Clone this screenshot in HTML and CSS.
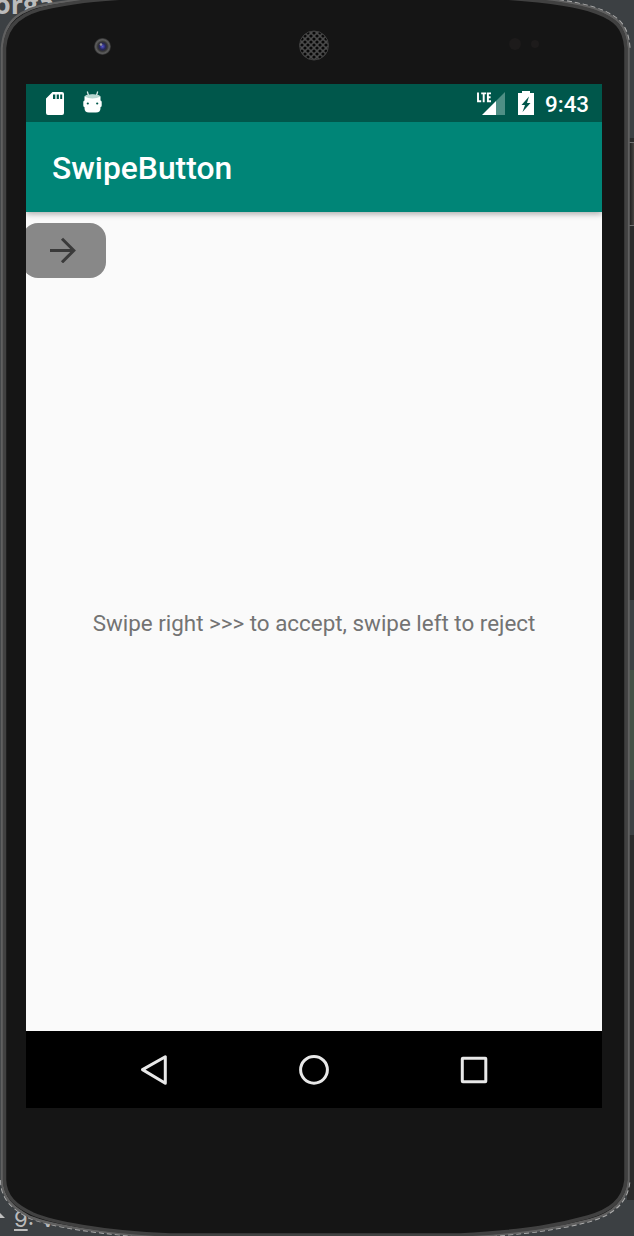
FILE: index.html
```
<!DOCTYPE html>
<html lang="en">
<head>
<meta charset="utf-8">
<title>SwipeButton</title>
<link rel="stylesheet" href="styles.css">
</head>
<body>
<div class="desktop">
  <div class="editor-text">orga</div>
  <div class="editor-tab"><u>9</u>: V</div>
  <svg class="device" viewBox="0 0 634 1236" aria-hidden="true">
    <defs>
      <radialGradient id="lens"><stop offset="0" stop-color="#5555cc"/><stop offset=".35" stop-color="#26265c"/><stop offset=".55" stop-color="#333"/><stop offset=".8" stop-color="#606060"/><stop offset="1" stop-color="#2a2a2a"/></radialGradient>
      <linearGradient id="key" x1="0" x2="1" y1="0" y2="0"><stop stop-color="#6a6a6a"/><stop offset=".3" stop-color="#202020"/><stop offset="1" stop-color="#484542"/></linearGradient>
      <pattern id="mesh" x="311" y="42" width="6" height="6" patternUnits="userSpaceOnUse"><rect width="6" height="6" fill="#4b4b4b"/><g fill="#080808"><circle cx="3" cy="3" r="1.600"/><circle r="1.600"/><circle cx="6" r="1.600"/><circle cy="6" r="1.600"/><circle cx="6" cy="6" r="1.600"/></g></pattern>
    </defs>
    <path fill="#2b2b2b" d="M627 48h7v95h-7zM627 224h7v446h-7zM627 835h7v365h-7z"/>
    <path fill="#3c4043" d="M627 48h7v90h-7zM627 600h7v70h-7zM627 782h7v52h-7z"/>
    <path fill="#445145" d="M627 670h7v110h-7z"/>
    <path fill="url(#key)" d="M628 143h6v82h-6z"/>
    <path stroke="#707070" fill="none" d="M628 142.500h6M628 225.500h6"/>
    <path fill="#c0c0c0" d="M0 1213l5 5H0z"/>
    <path fill="none" stroke="#b0b0b0" stroke-width="4" stroke-dasharray="5 3" d="M2 1180C2 1198 13 1208 30 1217C50 1225 100 1234 170 1237M460 1237C530 1233 560 1228 590 1220C611 1214 627 1203 628.500 1180M535 -3C580 3 598 10 598 10C617 17 627 25 628.500 48"/>
    <path fill="#151515" stroke="#606060" stroke-width="2.500" d="M2 48C4 20 20 9 50 4C75 0 100 -4 170 -6H470C535 -3 580 3 598 10C617 17 627 25 628.500 48V1180C627 1203 611 1214 590 1220C560 1228 530 1233 460 1237H170C100 1234 50 1225 30 1217C13 1208 2 1198 2 1180Z"/>
    <path fill="none" stroke="#414141" stroke-width="3.500" d="M4.500 48C6 24 22 12 52 6.500C76 2 100 -2 170 -4H470C535 -1 578 5 596 12C615 19 624.500 27 626 48V1180C624 1201 609 1211 588 1217C560 1225 530 1231 460 1235H170C100 1232 52 1222 33 1214C16 1206 5 1197 4.500 1180Z"/>
    <circle cx="102.500" cy="46.500" r="8.500" fill="url(#lens)"/>
    <circle cx="101" cy="44.500" r="1.300" fill="#999"/>
    <circle cx="314" cy="45.500" r="14.500" fill="url(#mesh)" stroke="#404040"/>
    <circle cx="515" cy="44" r="6" fill="#1d1b1b"/><circle cx="535" cy="44" r="4" fill="#1d1b1b"/>
  </svg>
  <div class="screen">
    <div class="status-bar">
      <svg class="sd" viewBox="0 0 18 23"><path fill="#fff" fill-rule="evenodd" d="M6.500 0H16q2 0 2 2V21q0 2-2 2H2q-2 0-2-2V6.500ZM7 2.500v4.500h2.300v-4.500Zm3.700 0v4.500h2.200v-4.500Zm3.500 0v4.500h2v-4.500Z"/></svg>
      <svg class="droid" viewBox="0 0 19 22"><path stroke="#d5e8e5" stroke-width="1.300" fill="none" d="M4.300.5l1.200 4M14.700.5l-1.200 4"/><path fill="#fff" d="M1.500 5.500Q3 3.500 9.500 3.500t8 2V9.500q1.200 0 1.200 1.500v3.500q0 1.500-1.200 1.500V17q0 4.500-4.500 4.500H6Q1.500 21.500 1.500 17v-1Q.3 16 .3 14.500V11q0-1.500 1.200-1.500Z"/><path fill="#b9d7d1" d="M1.500 5.500Q3 3.500 9.500 3.500t8 2Q14 7.500 9.500 7.500t-8-2Z"/><circle cx="4.800" cy="12.500" r="1.100" fill="#00574b"/><circle cx="14.200" cy="12.500" r="1.100" fill="#00574b"/></svg>
      <svg class="signal" viewBox="0 0 28 23"><path fill="#fff" d="M19 9v14H5z"/><path fill="#4f8f85" d="M28 0v23h-9V9z"/><path stroke="#fff" stroke-width="1.900" fill="none" d="M1 .5V9.300H4.200M4.200 1.400H9.200M6.700 1.400V10.200M14 1.400H10.900V9.300H14M10.900 5.300H13.600"/></svg>
      <svg class="battery" viewBox="0 0 16 24"><path fill="#fff" fill-rule="evenodd" d="M4 0h8v2h4v22H0V2h4ZM11 5.500L3.500 14H7l-2.500 7 8-9H9Z"/></svg>
      <span class="clock">9:43</span>
    </div>
    <div class="app-bar">SwipeButton</div>
    <div class="content">
      <div class="swipe-button"><svg class="arrow" viewBox="0 0 26 26"><path fill="none" stroke="#3a3a3a" stroke-width="3" d="M0 13.500h24M12 1.700L23.800 13.500 12 25.300"/></svg></div>
      <div class="message">Swipe right &gt;&gt;&gt; to accept, swipe left to reject</div>
    </div>
    <div class="nav-bar">
      <svg class="nav-icon" viewBox="0 0 32 32"><path d="M4.500 15.600L27.300 2.800v26.500Z"/></svg>
      <svg class="nav-icon" viewBox="0 0 32 32"><circle cx="16" cy="15.800" r="13.400"/></svg>
      <svg class="nav-icon" viewBox="0 0 32 32"><rect x="4.300" y="4.200" width="23.500" height="23.500" rx=".5"/></svg>
    </div>
  </div>
</div>
</body>
</html>
```
FILE: styles.css
```
* { box-sizing: border-box; }
body { margin: 0; font-family: Roboto, sans-serif; }
svg { display: block; flex: none; }
.desktop {
  position: relative;
  width: 634px;
  height: 1236px;
  padding: 84px 32px 128px 26px;
  overflow: hidden;
  background: #3c4043;
}
.editor-text, .editor-tab { position: absolute; color: #bbb; }
.editor-text { left: -6px; top: -12px; font: bold 27px/32px "Open Sans", sans-serif; }
.editor-tab { left: 14px; top: 1206px; font: 22px/26px Inter, sans-serif; }
.device { position: absolute; left: 0; top: 0; width: 634px; height: 1236px; }
.screen {
  position: relative;
  display: grid;
  grid-template-rows: 38px 90px 819px 77px;
  height: 1024px;
}
.status-bar {
  display: flex;
  align-items: center;
  padding: 0 13px 0 20px;
  background: #00574b;
  color: #fff;
}
.sd { width: 18px; height: 23px; }
.droid { width: 19px; height: 22px; margin: 0 auto 3px 19px; }
.signal { width: 28px; height: 23px; margin-right: 13px; }
.battery { width: 16px; height: 24px; margin-right: 11px; }
.clock { font-size: 22.4px; font-weight: 500; line-height: 36px; padding-top: 1px; width: 44px; white-space: nowrap; }
.app-bar {
  position: relative;
  padding: 3px 26px 0;
  background: #008577;
  color: #fff;
  font-size: 31.8px;
  font-weight: 500;
  line-height: 87px;
  box-shadow: 0 2px 6px rgba(0, 0, 0, .32);
  clip-path: inset(0 0 -10px);
}
.content {
  display: grid;
  grid-template-rows: 66px 1fr;
  padding-top: 11px;
  background: #fafafa;
  overflow: hidden;
}
.swipe-button {
  width: 84px;
  height: 54.5px;
  margin-left: -4px;
  padding: 14px 28px;
  border-radius: 16px;
  background: #888;
}
.arrow { width: 26px; height: 26px; }
.message {
  padding-top: 320px;
  text-align: center;
  color: #737373;
  font-size: 22.4px;
  line-height: 28px;
  white-space: nowrap;
}
.nav-bar {
  display: flex;
  justify-content: center;
  align-items: center;
  gap: 128px;
  background: #000;
}
.nav-icon { width: 32px; height: 32px; fill: none; stroke: #e8e8e8; stroke-width: 3; stroke-linejoin: round; }
```
